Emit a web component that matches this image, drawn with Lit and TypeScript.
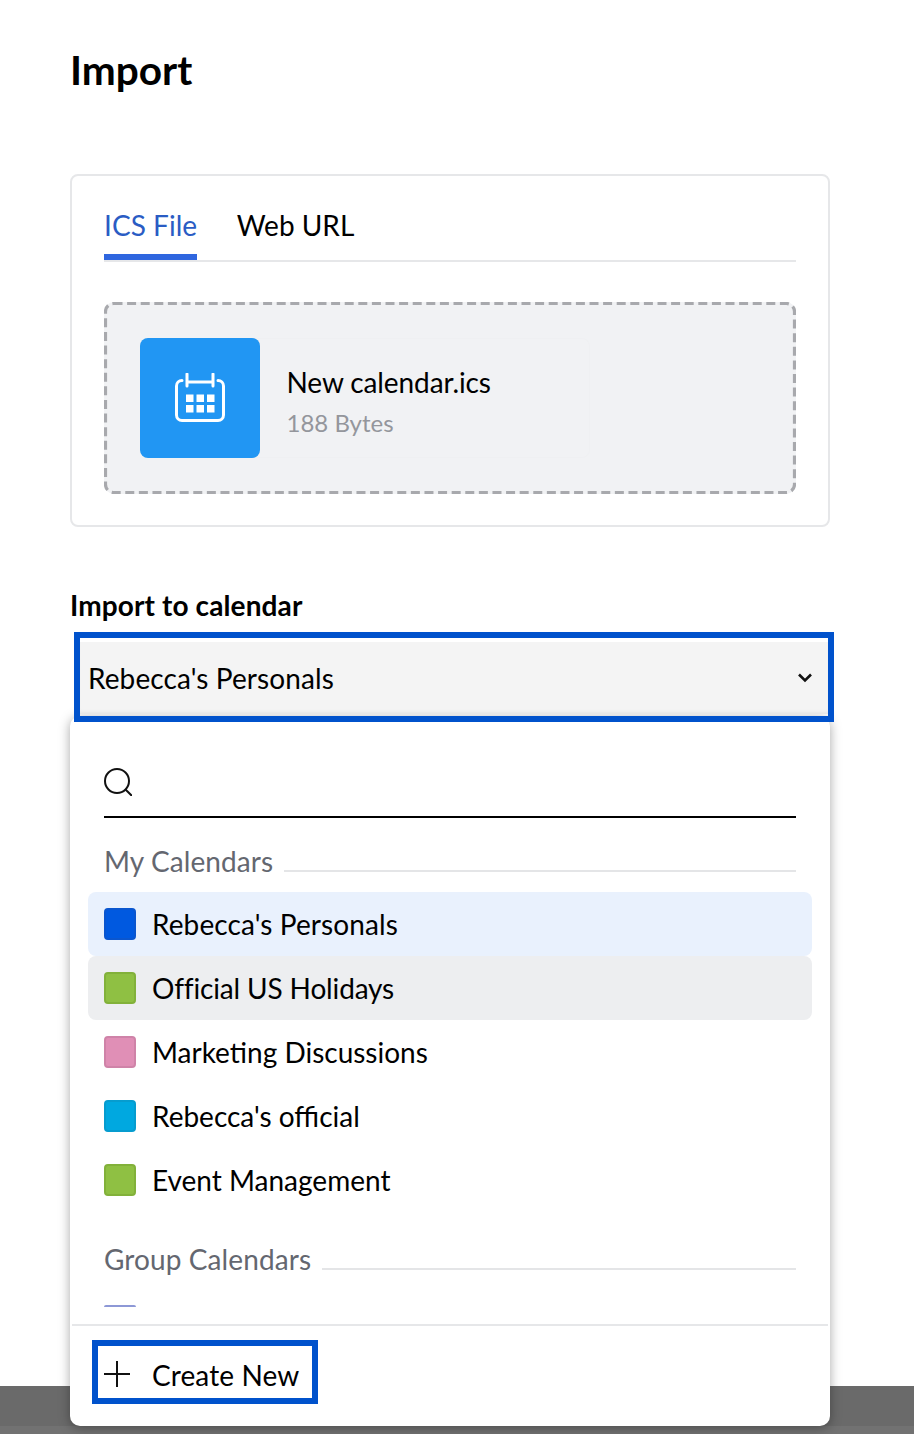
import { LitElement, html, css } from "lit";
import { customElement } from "lit/decorators.js";

const mine = [
  { name: "Rebecca's Personals", color: "#0059e0", edge: "#0a56cf", cls: "sel" },
  { name: "Official US Holidays", color: "#8fc043", edge: "#82b13a", cls: "hov" },
  { name: "Marketing Discussions", color: "#e08fb6", edge: "#cf83a8", cls: "" },
  { name: "Rebecca's official", color: "#00a8e0", edge: "#069ccf", cls: "" },
  { name: "Event Management", color: "#8fc043", edge: "#82b13a", cls: "" },
];

@customElement("app-root")
export class AppRoot extends LitElement {
  static styles = css`
    :host { display: block; position: relative; width: 914px; height: 1434px; overflow: hidden; background: #fff; font-family: Lato, "Liberation Sans", sans-serif; color: #000; font-size: 28px; }
    .page { padding: 45px 84px 0 70px; display: flex; flex-direction: column; }
    h1 { margin: 0; font-size: 40.6px; line-height: 50px; font-weight: 700; }
    .card { margin-top: 79px; height: 353px; box-sizing: border-box; border: 2px solid #e6e7e9; border-radius: 8px; padding: 29px 32px; }
    .tabs { display: flex; gap: 39.5px; border-bottom: 2px solid #e6e7e9; height: 55px; }
    .tab { line-height: 40px; height: 55px; box-sizing: border-box; }
    .tab.on { color: #2a5cc4; border-bottom: 6px solid #2f66df; letter-spacing: 0.05px; }
    .drop { position: relative; margin-top: 40px; height: 192px; box-sizing: border-box; border-radius: 10px; background: #f1f2f4; padding: 36px; }
    .dash { position: absolute; inset: 0; }
    .file { display: flex; width: 450px; height: 120px; border-radius: 8px; box-shadow: inset 0 0 0 1px #eff0f2; }
    .fi { width: 120px; height: 120px; border-radius: 8px; background: #2196f3; display: flex; align-items: center; justify-content: center; }
    .meta { margin-left: 26.5px; display: flex; flex-direction: column; padding-top: 25px; }
    .fn { line-height: 38px; letter-spacing: -0.1px; }
    .sz { font-size: 24px; line-height: 34px; color: #94969c; margin-top: 5px; }
    .label { margin-top: 59px; font-weight: 700; line-height: 38px; letter-spacing: 0.12px; }
    .select { position: absolute; left: 74px; top: 632px; width: 760px; height: 90px; box-sizing: border-box; border: 6px solid #0052cc; z-index: 3; }
    .select .in { height: 72px; margin-top: 4px; background: #f4f4f4; display: flex; align-items: center; justify-content: space-between; padding: 0 16px 0 8px; box-shadow: inset 0 -4px 4px -3px #ddd; letter-spacing: 0.1px; }
    .menu { position: absolute; left: 70px; top: 716px; width: 760px; height: 710px; background: #fff; border-radius: 10px; box-shadow: 0 2px 12px rgba(0,0,0,.35); z-index: 2; display: flex; flex-direction: column; }
    .search { margin: 46px 34px 0; height: 56px; box-sizing: border-box; border-bottom: 2px solid #000; }
    .search svg { display: block; margin-top: 6px; }
    .sec { display: flex; align-items: center; gap: 11px; margin: 23px 34px 0; height: 40px; color: #646770; letter-spacing: 0.1px; }
    .sec i { flex: 1; height: 2px; background: #e4e5e7; margin-top: 20px; }
    .list { margin: 11px 18px 0; }
    .row { display: flex; align-items: center; gap: 16px; height: 64px; padding: 0 16px; border-radius: 8px; }
    .row.sel { background: #e9f1fd; letter-spacing: 0.1px; }
    .row.hov { background: #edeef0; letter-spacing: -0.15px; }
    .sw { width: 32px; height: 32px; box-sizing: border-box; border-radius: 4px; border: 2px solid; }
    .grp { margin-top: 27px; }
    .peek { margin: 26px 34px 0; width: 32px; height: 2px; background: #8d98d6; border-radius: 3px 3px 0 0; }
    .foot { margin: 17px 2px 0; border-top: 2px solid #e6e7e9; flex: 1; position: relative; }
    .create { position: absolute; left: 20px; top: 14px; width: 226px; height: 64px; box-sizing: border-box; border: 6px solid #0052cc; display: flex; align-items: center; gap: 22px; padding-left: 6px; letter-spacing: 0.1px; }
    .create svg { margin-top: 4px; }
    .create span { line-height: 40px; margin-top: 6px; }
    .shade { position: absolute; left: 0; right: 0; bottom: 0; height: 48px; background: #6a6a6a; box-shadow: inset 0 -8px 0 #727272; z-index: 1; }
  `;

  render() {
    return html`
      <div class="page">
        <h1>Import</h1>
        <div class="card">
          <div class="tabs">
            <div class="tab on">ICS File</div>
            <div class="tab">Web URL</div>
          </div>
          <div class="drop">
            <svg class="dash" width="692" height="192" viewBox="0 0 692 192" fill="none">
              <rect x="1.5" y="1.5" width="689" height="189" rx="8" stroke="#a8a9ad" stroke-width="3.2" stroke-dasharray="9 4.6"/>
            </svg>
            <div class="file">
              <div class="fi">
                <svg width="50" height="50" viewBox="0 0 50 50" fill="none" stroke="#fff" stroke-width="3" stroke-linecap="round">
                  <path d="M7 7.5a5.5 5.5 0 0 0-5.500 5.500v29A5.500 5.500 0 0 0 7 47.500h36a5.500 5.500 0 0 0 5.500-5.500V13A5.500 5.500 0 0 0 43 7.500"/>
                  <path d="M12 1v12M38 1v12M12 9h26"/>
                  <g fill="#fff" stroke="none">
                    <rect x="11" y="21.500" width="7.500" height="7.500"/><rect x="21.500" y="21.500" width="7.500" height="7.500"/><rect x="32" y="21.500" width="7.500" height="7.500"/>
                    <rect x="11" y="32" width="7.500" height="7.500"/><rect x="21.500" y="32" width="7.500" height="7.500"/><rect x="32" y="32" width="7.500" height="7.500"/>
                  </g>
                </svg>
              </div>
              <div class="meta">
                <div class="fn">New calendar.ics</div>
                <div class="sz">188 Bytes</div>
              </div>
            </div>
          </div>
        </div>
        <div class="label">Import to calendar</div>
      </div>

      <div class="select">
        <div class="in">
          <span>Rebecca's Personals</span>
          <svg width="14" height="10" viewBox="0 0 14 10" fill="none" stroke="#111" stroke-width="2.6"><path d="M1 1.5l6 6 6-6"/></svg>
        </div>
      </div>

      <div class="menu">
        <div class="search">
          <svg width="28" height="28" viewBox="0 0 28 28" fill="none" stroke="#111" stroke-width="2">
            <circle cx="13" cy="13" r="12"/><path d="M21.500 21.500L28 28"/>
          </svg>
        </div>
        <div class="sec"><span>My Calendars</span><i></i></div>
        <div class="list">
          ${mine.map(
            (m) => html`<div class="row ${m.cls}">
              <div class="sw" style="background:${m.color};border-color:${m.edge}"></div>
              <span>${m.name}</span>
            </div>`
          )}
        </div>
        <div class="sec grp"><span>Group Calendars</span><i></i></div>
        <div class="peek"></div>
        <div class="foot">
          <div class="create">
            <svg width="26" height="26" viewBox="0 0 26 26" stroke="#111" stroke-width="2"><path d="M13 0v26M0 13h26"/></svg>
            <span>Create New</span>
          </div>
        </div>
      </div>
      <div class="shade"></div>
    `;
  }
}
